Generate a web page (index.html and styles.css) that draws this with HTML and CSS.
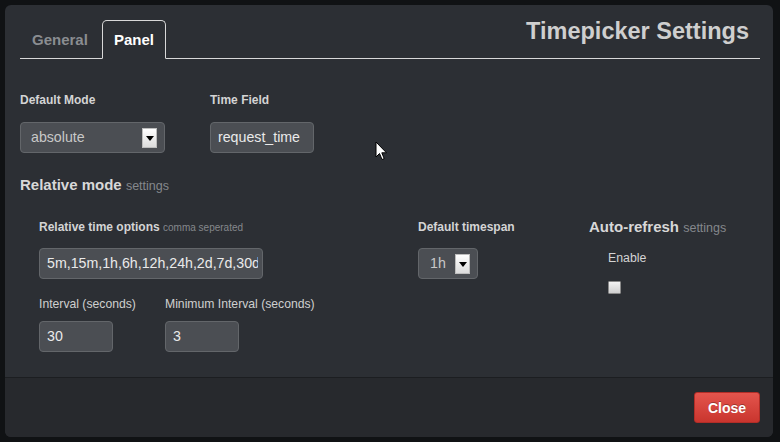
FILE: index.html
```html
<!DOCTYPE html>
<html>
<head>
<meta charset="utf-8">
<link rel="stylesheet" href="styles.css">
</head>
<body>
<div class="modal">
  <div class="modal-body">
    <div class="header">
      <ul class="tabs">
        <li class="tab">General</li>
        <li class="tab active">Panel</li>
      </ul>
      <h3 class="title">Timepicker Settings</h3>
    </div>

    <div class="row row-top">
      <div class="field f-mode">
        <label class="lbl">Default Mode</label>
        <div class="select sel-mode"><span class="sel-text">absolute</span><span class="arrow"></span></div>
      </div>
      <div class="field">
        <label class="lbl">Time Field</label>
        <div class="input in-field">request_time</div>
      </div>
    </div>

    <h4 class="section">Relative mode <small>settings</small></h4>

    <div class="row row-bottom">
      <div class="col-rel">
        <div class="field">
          <label class="lbl">Relative time options <small>comma seperated</small></label>
          <div class="input in-rel"><span class="clip">5m,15m,1h,6h,12h,24h,2d,7d,30d</span></div>
        </div>
        <div class="row row-int">
          <div class="field f-int">
            <label class="lbl light">Interval (seconds)</label>
            <div class="input in-small">30</div>
          </div>
          <div class="field">
            <label class="lbl light">Minimum Interval (seconds)</label>
            <div class="input in-small">3</div>
          </div>
        </div>
      </div>
      <div class="col-span">
        <div class="field">
          <label class="lbl">Default timespan</label>
          <div class="select sel-span"><span class="sel-text">1h</span><span class="arrow"></span></div>
        </div>
      </div>
      <div class="col-auto">
        <h4 class="sub">Auto-refresh <small>settings</small></h4>
        <div class="auto-inner">
          <div class="enable">Enable</div>
          <span class="checkbox"></span>
        </div>
      </div>
    </div>
  </div>
  <div class="modal-footer">
    <button class="btn-close">Close</button>
  </div>
</div>
<svg class="cursor" width="13" height="20" viewBox="0 0 13 20"><path d="M1 1 L1 16 L4.5 12.5 L7 18.5 L9.2 17.6 L6.8 11.8 L11.5 11.8 Z" fill="#fff" stroke="#000" stroke-width="1"/></svg>
</body>
</html>
```

FILE: styles.css
```css
* { box-sizing: border-box; }
html, body { margin: 0; padding: 0; }
body {
  width: 780px;
  height: 442px;
  background: #101214;
  font-family: "Liberation Sans", Arial, sans-serif;
  color: #d6d6d6;
  padding: 5px 7px 5px 5px;
  position: relative;
  overflow: hidden;
}
.modal {
  width: 768px;
  height: 432px;
  background: #2c2f34;
  border-radius: 6px;
  display: flex;
  flex-direction: column;
  overflow: hidden;
}
.modal-body {
  flex: 1;
  padding: 15px 13px 0 15px;
}
.header {
  display: flex;
  justify-content: space-between;
  align-items: flex-start;
  border-bottom: 1px solid #d8d8d8;
  height: 39px;
}
.tabs {
  list-style: none;
  margin: 0;
  padding: 0;
  display: flex;
  align-self: flex-end;
  margin-bottom: -1px;
}
.tab {
  font-size: 15px;
  font-weight: bold;
  line-height: 17px;
  padding: 10px 11px;
  color: #8a8d91;
  border: 1px solid transparent;
  border-radius: 5px 5px 0 0;
  margin-right: 2px;
}
.tab.active {
  color: #ffffff;
  background: #2c2f34;
  border-color: #d8d8d8;
  border-bottom-color: #2c2f34;
}
.title {
  margin: 0 11px 0 0;
  font-size: 23.5px;
  line-height: 22px;
  font-weight: bold;
  color: #cfcfcf;
}
.row { display: flex; }
.row-top { margin-top: 33px; }
.f-mode { width: 190px; }
.lbl {
  display: block;
  height: 16px;
  font-size: 12px;
  font-weight: bold;
  line-height: 16px;
  color: #d4d4d4;
  margin-bottom: 14px;
}
.lbl small {
  font-size: 10px;
  font-weight: normal;
  color: #85888c;
}
.lbl.light { font-weight: normal; color: #cfcfcf; font-size: 12.2px; }
.input, .select {
  height: 31px;
  border: 1px solid #63666a;
  border-radius: 4px;
  background: #4b4e53;
  color: #eaeaea;
  font-size: 14.2px;
  line-height: 29px;
  padding: 0 7px;
  white-space: nowrap;
  overflow: hidden;
}
.in-field { width: 104px; }
.in-rel { width: 224px; }
.clip {
  display: block;
  width: 211px;
  overflow: hidden;
}
.in-small { width: 74px; }
.select {
  display: flex;
  align-items: center;
  justify-content: space-between;
  color: #c8c8c8;
  padding: 0 7px 0 10px;
}
.sel-mode { width: 145px; }
.sel-span { width: 60px; padding-left: 11px; }
.arrow {
  width: 15px;
  height: 20px;
  background: linear-gradient(#ffffff, #dcdcdc);
  border: 1px solid #bdbdbd;
  position: relative;
}
.arrow::after {
  content: "";
  position: absolute;
  left: 3px;
  top: 7px;
  border-left: 4px solid transparent;
  border-right: 4px solid transparent;
  border-top: 5px solid #000;
}
.section {
  margin: 23px 0 0 0;
  height: 18px;
  font-size: 15px;
  line-height: 18px;
  font-weight: bold;
  color: #d8d8d8;
}
.section small, .sub small {
  font-size: 12.5px;
  line-height: 1;
  font-weight: normal;
  color: #85888c;
}
.row-bottom { margin-top: 25px; }
.col-rel { width: 398px; padding-left: 19px; }
.col-rel .lbl { margin-bottom: 13px; }
.row-int { margin-top: 17px; }
.row-int .lbl { margin-bottom: 9px; }
.f-int { width: 126px; }
.col-span { width: 171px; }
.col-span .lbl { margin-bottom: 13px; }
.sub {
  margin: 0;
  height: 16px;
  font-size: 15px;
  line-height: 16px;
  font-weight: bold;
  color: #d8d8d8;
}
.auto-inner { padding-left: 19px; }
.enable {
  margin-top: 15px;
  height: 16px;
  font-size: 12.3px;
  line-height: 16px;
  color: #d4d4d4;
}
.checkbox {
  display: block;
  margin-top: 15px;
  width: 13px;
  height: 13px;
  border: 1px solid #8a8a8a;
  background: linear-gradient(#f4f4f4, #cfcfcf);
  border-radius: 1px;
}
.modal-footer {
  height: 60px;
  border-top: 1px solid #1c1e21;
  background: #27292d;
  display: flex;
  justify-content: flex-end;
  align-items: flex-start;
  padding: 14px 13px 0 0;
}
.btn-close {
  width: 66px;
  height: 31px;
  border: 1px solid #b22d27;
  border-radius: 3px;
  background: linear-gradient(#e4554d, #c9352e);
  color: #ffffff;
  font-family: "Liberation Sans", Arial, sans-serif;
  font-size: 14px;
  font-weight: bold;
  text-shadow: 0 -1px 0 rgba(0,0,0,0.3);
  padding: 0;
}
.cursor {
  position: absolute;
  left: 375px;
  top: 141px;
}
```
